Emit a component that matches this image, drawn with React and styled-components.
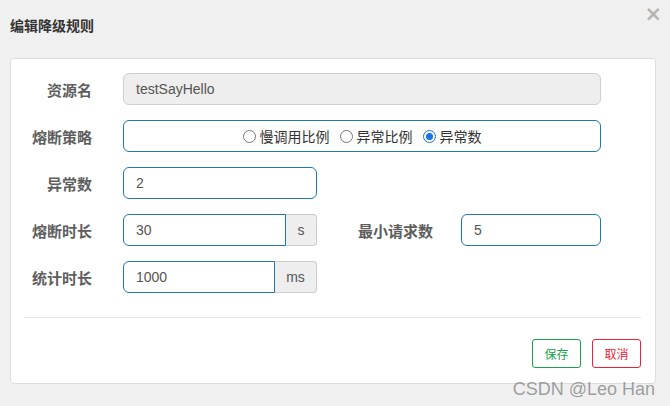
import React from 'react'
import styled, { createGlobalStyle } from 'styled-components';

const GlobalStyle = createGlobalStyle`
  html, body {
    margin: 0;
    padding: 0;
    background: #f0f0f0;
  }
  body {
    font-family: "Liberation Sans", Arial, "Noto Sans CJK SC", sans-serif;
    font-size: 14px;
    color: #333;
  }
`;

const Dialog = styled.div`
  position: relative;
  width: 670px;
  height: 406px;
  box-sizing: border-box;
  padding: 0 14px 0 10px;
`;

const Header = styled.div`
  height: 58px;
  display: flex;
  align-items: center;
  justify-content: space-between;
  padding-bottom: 8px;
  box-sizing: border-box;
`;

const Title = styled.h4`
  margin: 0;
  font-size: 14px;
  font-weight: bold;
  color: #333;
`;

const Close = styled.span`
  align-self: flex-start;
  margin-top: 4px;
  margin-right: -6px;
  font-size: 21px;
  line-height: 1;
  font-weight: bold;
  color: #b5b5b5;
  font-family: "DejaVu Sans", sans-serif;
`;

const Panel = styled.div`
  height: 326px;
  box-sizing: border-box;
  background: #fff;
  border: 1px solid #ddd;
  border-radius: 4px;
  padding: 14px 14px 0 14px;
`;

const Row = styled.div`
  display: flex;
  align-items: center;
  height: 32px;
  margin-bottom: 15px;
`;

const Label = styled.label`
  width: ${p => p.width || 67}px;
  margin-right: ${p => p.gap || 31}px;
  text-align: right;
  font-size: 15px;
  font-weight: bold;
  color: #5e5e5e;
  white-space: nowrap;
`;

const Input = styled.div`
  width: ${p => p.width}px;
  height: 32px;
  box-sizing: border-box;
  border: 1px solid ${p => (p.disabled ? '#cfcfcf' : '#1f78b4')};
  background: ${p => (p.disabled ? '#eeeeee' : '#fff')};
  border-radius: ${p => (p.addon ? '6px 0 0 6px' : '6px')};
  padding-left: 12px;
  display: flex;
  align-items: center;
  font-size: 14px;
  color: #555;
`;

const Addon = styled.div`
  width: ${p => p.width}px;
  height: 32px;
  box-sizing: border-box;
  border: 1px solid #ccc;
  border-left: none;
  border-radius: 0 4px 4px 0;
  background: #eee;
  display: flex;
  align-items: center;
  justify-content: center;
  font-size: 14px;
  color: #555;
`;

const RadioBox = styled(Input)`
  justify-content: center;
  padding-left: 0;
  gap: 10px;
`;

const RadioItem = styled.label`
  display: flex;
  align-items: center;
  gap: 4px;
  font-size: 14px;
  color: #333;
`;

const Circle = styled.span`
  width: 13px;
  height: 13px;
  box-sizing: border-box;
  border-radius: 50%;
  border: 1px solid ${p => (p.checked ? '#1a73e8' : '#767676')};
  background: #fff;
  display: flex;
  align-items: center;
  justify-content: center;
  &::after {
    content: '';
    display: ${p => (p.checked ? 'block' : 'none')};
    width: 7px;
    height: 7px;
    border-radius: 50%;
    background: #1a73e8;
  }
`;

const Divider = styled.div`
  height: 1px;
  background: #e5e5e5;
  margin: 24px 0 21px 0;
`;

const Footer = styled.div`
  display: flex;
  justify-content: flex-end;
  gap: 11px;
`;

const Button = styled.button`
  width: 49px;
  height: 29px;
  box-sizing: border-box;
  background: #fff;
  border: 1px solid ${p => p.color};
  color: ${p => p.color};
  border-radius: 3px;
  font-size: 12px;
  font-family: "Liberation Sans", "Noto Sans CJK SC", sans-serif;
  padding: 0;
`;

const Watermark = styled.div`
  position: absolute;
  right: 15px;
  bottom: 6px;
  font-size: 18px;
  color: rgba(120, 120, 120, 0.7);
  font-family: "Liberation Sans", Arial, sans-serif;
`;

const Radio = ({ checked, children }) => (
  <RadioItem>
    <Circle checked={checked} />
    {children}
  </RadioItem>
);

export default function App() {
  return (
    <>
      <GlobalStyle />
      <Dialog>
        <Header>
          <Title>编辑降级规则</Title>
          <Close>×</Close>
        </Header>
        <Panel>
          <Row>
            <Label>资源名</Label>
            <Input width={478} disabled>testSayHello</Input>
          </Row>
          <Row>
            <Label>熔断策略</Label>
            <RadioBox width={478}>
              <Radio>慢调用比例</Radio>
              <Radio>异常比例</Radio>
              <Radio checked>异常数</Radio>
            </RadioBox>
          </Row>
          <Row>
            <Label>异常数</Label>
            <Input width={194}>2</Input>
          </Row>
          <Row>
            <Label>熔断时长</Label>
            <Input width={163} addon>30</Input>
            <Addon width={31}>s</Addon>
            <Label width={116} gap={28}>最小请求数</Label>
            <Input width={140}>5</Input>
          </Row>
          <Row>
            <Label>统计时长</Label>
            <Input width={152} addon>1000</Input>
            <Addon width={42}>ms</Addon>
          </Row>
          <Divider />
          <Footer>
            <Button color="#16a34a">保存</Button>
            <Button color="#f0203a">取消</Button>
          </Footer>
        </Panel>
        <Watermark>CSDN @Leo Han</Watermark>
      </Dialog>
    </>
  );
}
